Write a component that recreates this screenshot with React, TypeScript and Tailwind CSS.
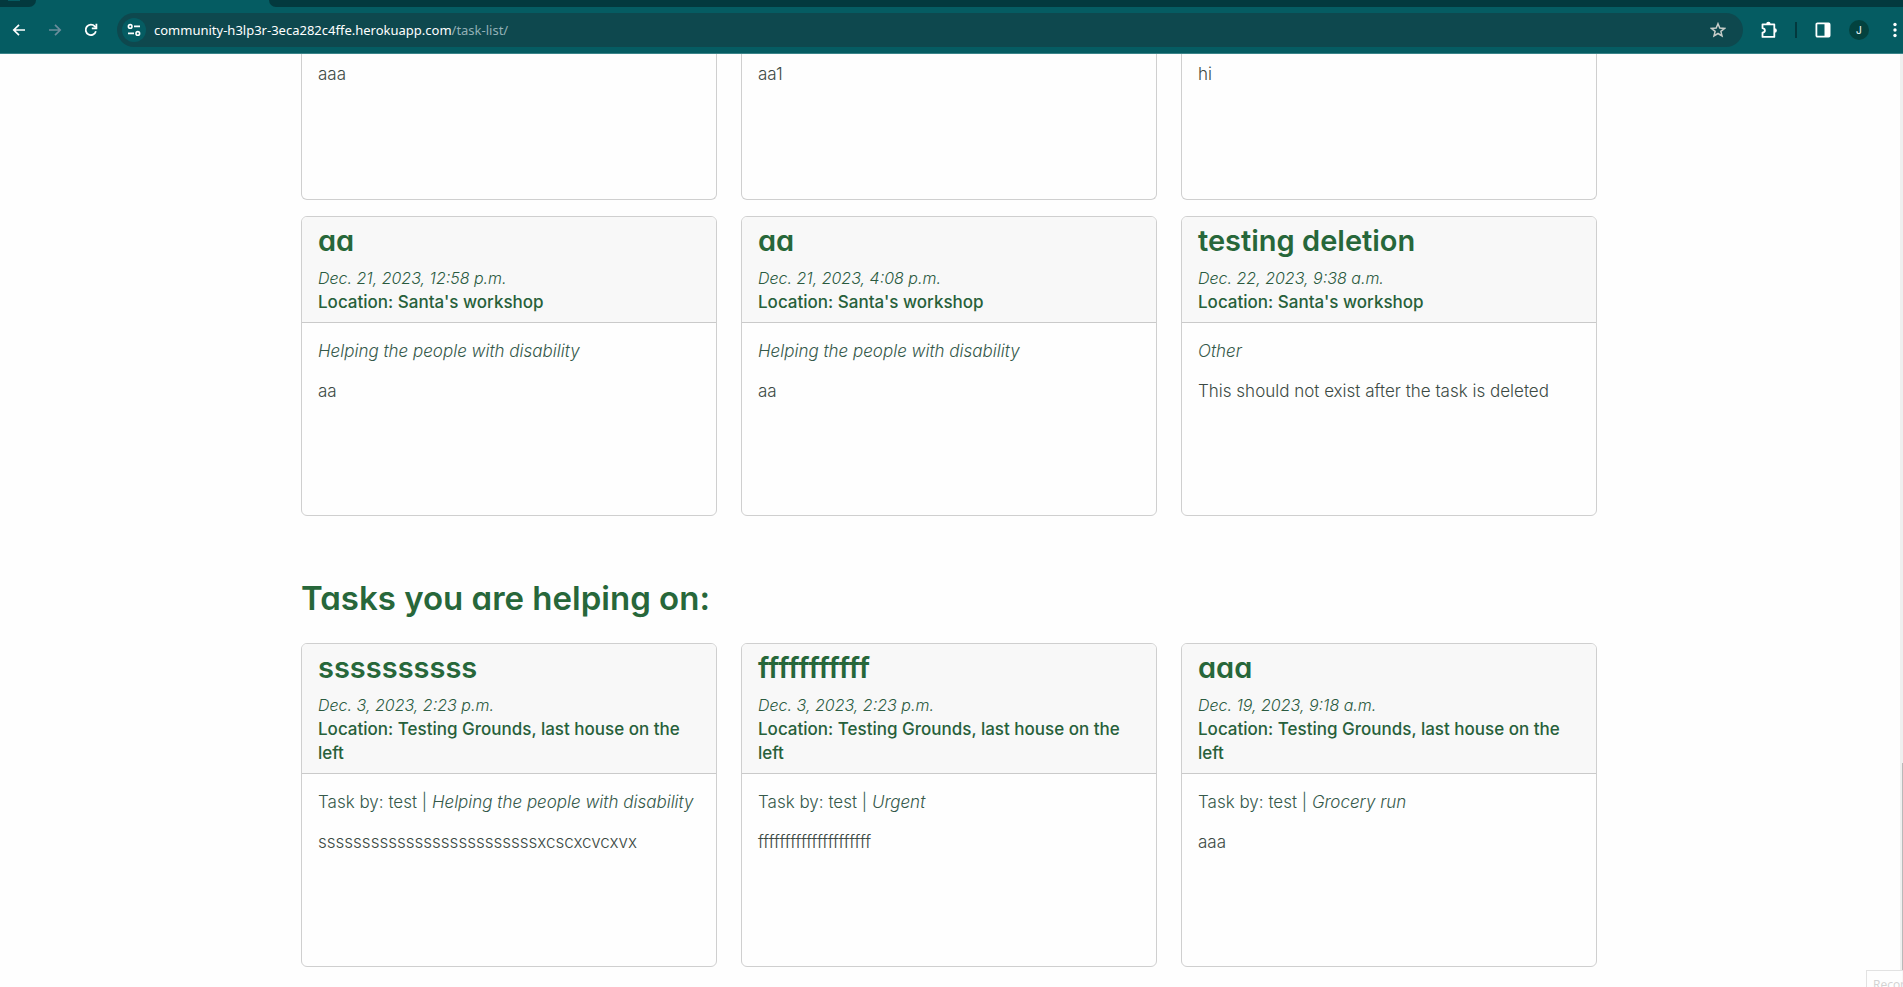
import type { ReactNode } from 'react';

type Task = {
  title: string;
  date: string;
  location: string;
  author?: string;
  category: string;
  body: string;
};

const WORKSHOP = "Santa's workshop";
const GROUNDS = 'Testing Grounds, last house on the left';
const DISABILITY = 'Helping the people with disability';

const clippedBodies = ['aaa', 'aa1', 'hi'];

const ownTasks: Task[] = [
  { title: 'aa', date: 'Dec. 21, 2023, 12:58 p.m.', location: WORKSHOP, category: DISABILITY, body: 'aa' },
  { title: 'aa', date: 'Dec. 21, 2023, 4:08 p.m.', location: WORKSHOP, category: DISABILITY, body: 'aa' },
  {
    title: 'testing deletion',
    date: 'Dec. 22, 2023, 9:38 a.m.',
    location: WORKSHOP,
    category: 'Other',
    body: 'This should not exist after the task is deleted',
  },
];

const helpingTasks: Task[] = [
  {
    title: 'ssssssssss',
    date: 'Dec. 3, 2023, 2:23 p.m.',
    location: GROUNDS,
    author: 'test',
    category: DISABILITY,
    body: 'sssssssssssssssssssssssssxcscxcvcxvx',
  },
  {
    title: 'fffffffffff',
    date: 'Dec. 3, 2023, 2:23 p.m.',
    location: GROUNDS,
    author: 'test',
    category: 'Urgent',
    body: 'fffffffffffffffffffff',
  },
  {
    title: 'aaa',
    date: 'Dec. 19, 2023, 9:18 a.m.',
    location: GROUNDS,
    author: 'test',
    category: 'Grocery run',
    body: 'aaa',
  },
];

function ToolButton({ label, className = 'w-5', children }: { label: string; className?: string; children: ReactNode }) {
  return (
    <button type="button" aria-label={label} className={`flex h-5 shrink-0 items-center justify-center ${className}`}>
      {children}
    </button>
  );
}

function BrowserBar() {
  return (
    <header className="shrink-0 border-b border-[#3a8489] bg-[#055c62]">
      <div className="flex h-[7px] bg-[#055c62]">
        <div className="w-9 rounded-br-[9px] bg-[#03393e] pl-2">
          <div className="h-px w-3 bg-[#055c62]" />
        </div>
        <div className="ml-[233px] grow rounded-bl-[9px] bg-[#03393e]" />
      </div>
      <div className="flex h-[46px] items-center pl-[9px] text-white">
        <ToolButton label="Back">
          <svg width="14" height="14" viewBox="0 0 14 14" fill="none" stroke="currentColor" strokeWidth="1.7">
            <path d="M13 7H2M7 1.8 1.8 7 7 12.2" />
          </svg>
        </ToolButton>
        <ToolButton label="Forward" className="ml-4 w-5 text-[#6a8d9b]">
          <svg width="14" height="14" viewBox="0 0 14 14" fill="none" stroke="currentColor" strokeWidth="1.7">
            <path d="M1 7h11M7 1.8 12.2 7 7 12.2" />
          </svg>
        </ToolButton>
        <ToolButton label="Reload" className="ml-4 w-5">
          <svg width="14" height="14" viewBox="0 0 14 14" fill="none" stroke="currentColor" strokeWidth="1.8">
            <path d="M11.9 8.3A5.2 5.2 0 1 1 10.8 3.4l1 1" />
            <path d="M12.4.8v4.6H7.8" />
          </svg>
        </ToolButton>
        <div className="ml-4 flex h-[34px] grow items-center rounded-full bg-[#0e484e] pr-[15px] pl-[5px]">
          <button
            type="button"
            aria-label="View site information"
            className="flex size-6 shrink-0 items-center justify-center rounded-full bg-[#055c62]"
          >
            <svg width="14" height="14" viewBox="0 0 14 14" fill="none" stroke="currentColor" strokeWidth="1.6">
              <circle cx="3.2" cy="3.4" r="1.8" />
              <path d="M7 3.4h6M1 10.4h6" />
              <circle cx="10.8" cy="10.4" r="1.8" />
            </svg>
          </button>
          <a
            href="/task-list/"
            className="ml-2 grow font-['Noto_Sans','Open_Sans',sans-serif] text-[13px] leading-5 text-white"
          >
            community-h3lp3r-3eca282c4ffe.herokuapp.com<span className="text-[#93b0b6]">/task-list/</span>
          </a>
          <ToolButton label="Bookmark this page" className="w-5 text-[#c8cdc9]">
            <svg width="16" height="16" viewBox="0 0 16 16" fill="none" stroke="currentColor" strokeWidth="1.5">
              <path d="m8 1.7 1.8 4.3 4.7.4-3.6 3 1.1 4.6L8 11.5 4 14l1.1-4.6-3.6-3 4.7-.4z" />
            </svg>
          </ToolButton>
        </div>
        <ToolButton label="Extensions" className="ml-4 w-5">
          <svg width="18" height="18" viewBox="0 0 18 18">
            <path
              d="M2.5 3.3h11.8v12.6H2.5v-4.2c1.6-.3 2.4-1 2.4-2.2S4.1 7.5 2.5 7.2z"
              fill="none"
              stroke="currentColor"
              strokeWidth="1.8"
              strokeLinejoin="round"
            />
            <path d="M6.2 3a2.2 2.2 0 0 1 4.4 0zM14.6 7.200a2.300 2.300 0 0 1 0 4.600z" fill="currentColor" />
          </svg>
        </ToolButton>
        <span className="mx-4 h-4 w-0.5 bg-[#03393e]" />
        <ToolButton label="Side panel">
          <svg width="16" height="16" viewBox="0 0 16 16">
            <rect x="1.4" y="1.4" width="13.2" height="13.2" rx="1" fill="none" stroke="currentColor" strokeWidth="1.8" />
            <path d="M9.5 1.5h5v13h-5z" fill="currentColor" />
          </svg>
        </ToolButton>
        <button
          type="button"
          aria-label="Profile"
          className="ml-4 size-5 shrink-0 rounded-full bg-[#03423f] font-['Inter',sans-serif] text-[10px] leading-5 font-medium text-[#dfe9e9]"
        >
          J
        </button>
        <ToolButton label="Menu" className="ml-[18px] w-4">
          <svg width="4" height="16" viewBox="0 0 4 16" fill="currentColor">
            <circle cx="2" cy="2.5" r="1.7" />
            <circle cx="2" cy="8" r="1.7" />
            <circle cx="2" cy="13.5" r="1.7" />
          </svg>
        </ToolButton>
      </div>
    </header>
  );
}

function Card({ task }: { task: Task }) {
  return (
    <article className="overflow-hidden rounded-md border border-[#cfcfcf]">
      <div className="border-b border-[#cacaca] bg-[#f8f8f8] px-4 py-2 text-[#2a5a3f]">
        <h3 className="mb-2.5 text-[29px] leading-[31px] font-semibold text-[#27673a] [font-feature-settings:'cv11']">
          {task.title}
        </h3>
        <p className="text-base font-light italic">{task.date}</p>
        <p className="font-medium text-[#27603a]">Location: {task.location}</p>
      </div>
      <div className="h-[192px] p-4 font-light">
        <p className="mb-4 text-[#35594a]">
          {task.author && <>Task by: {task.author} | </>}
          <i>{task.category}</i>
        </p>
        <p className="text-[#3c4a44]">{task.body}</p>
      </div>
    </article>
  );
}

export default function App() {
  return (
    <div className="flex h-screen flex-col overflow-hidden bg-[#fefefe]">
      <BrowserBar />
      <div className="relative flex min-h-0 grow overflow-hidden">
        <main className="min-w-0 grow font-['Inter','Open_Sans',sans-serif] text-[17px] leading-6">
          <div className="mx-auto max-w-[1298px] pr-0.5">
            <div className="grid grid-cols-3 gap-6">
              {clippedBodies.map((body) => (
                <article
                  key={body}
                  className="h-[146px] rounded-b-md border border-t-0 border-[#cfcfcf] px-4 pt-2 font-light text-[#3c4a44]"
                >
                  <p>{body}</p>
                </article>
              ))}
            </div>
            <section className="mt-4 grid grid-cols-3 items-start gap-6">
              {ownTasks.map((task) => (
                <Card key={task.date} task={task} />
              ))}
            </section>
            <h2 className="mt-16 mb-[27px] text-[33px] leading-9 font-semibold text-[#27673a] [font-feature-settings:'cv11']">
              Tasks you are helping on:
            </h2>
            <section className="grid grid-cols-3 items-start gap-6">
              {helpingTasks.map((task) => (
                <Card key={task.title} task={task} />
              ))}
            </section>
          </div>
        </main>
        <div className="flex w-[3px] shrink-0 flex-col justify-end bg-[#efefef] pl-0.5">
          <div className="h-[224px] bg-[#b9b9b9]" />
        </div>
        <div className="absolute right-0 bottom-0 h-[17px] w-[37px] overflow-hidden border-t border-l border-[#e2e2e2] bg-[#fefefe]/90 pt-1 pl-1.5 font-['Open_Sans',sans-serif] text-[12px] leading-5 whitespace-nowrap text-[#d2d2d2]">
          Recor
        </div>
      </div>
    </div>
  );
}
